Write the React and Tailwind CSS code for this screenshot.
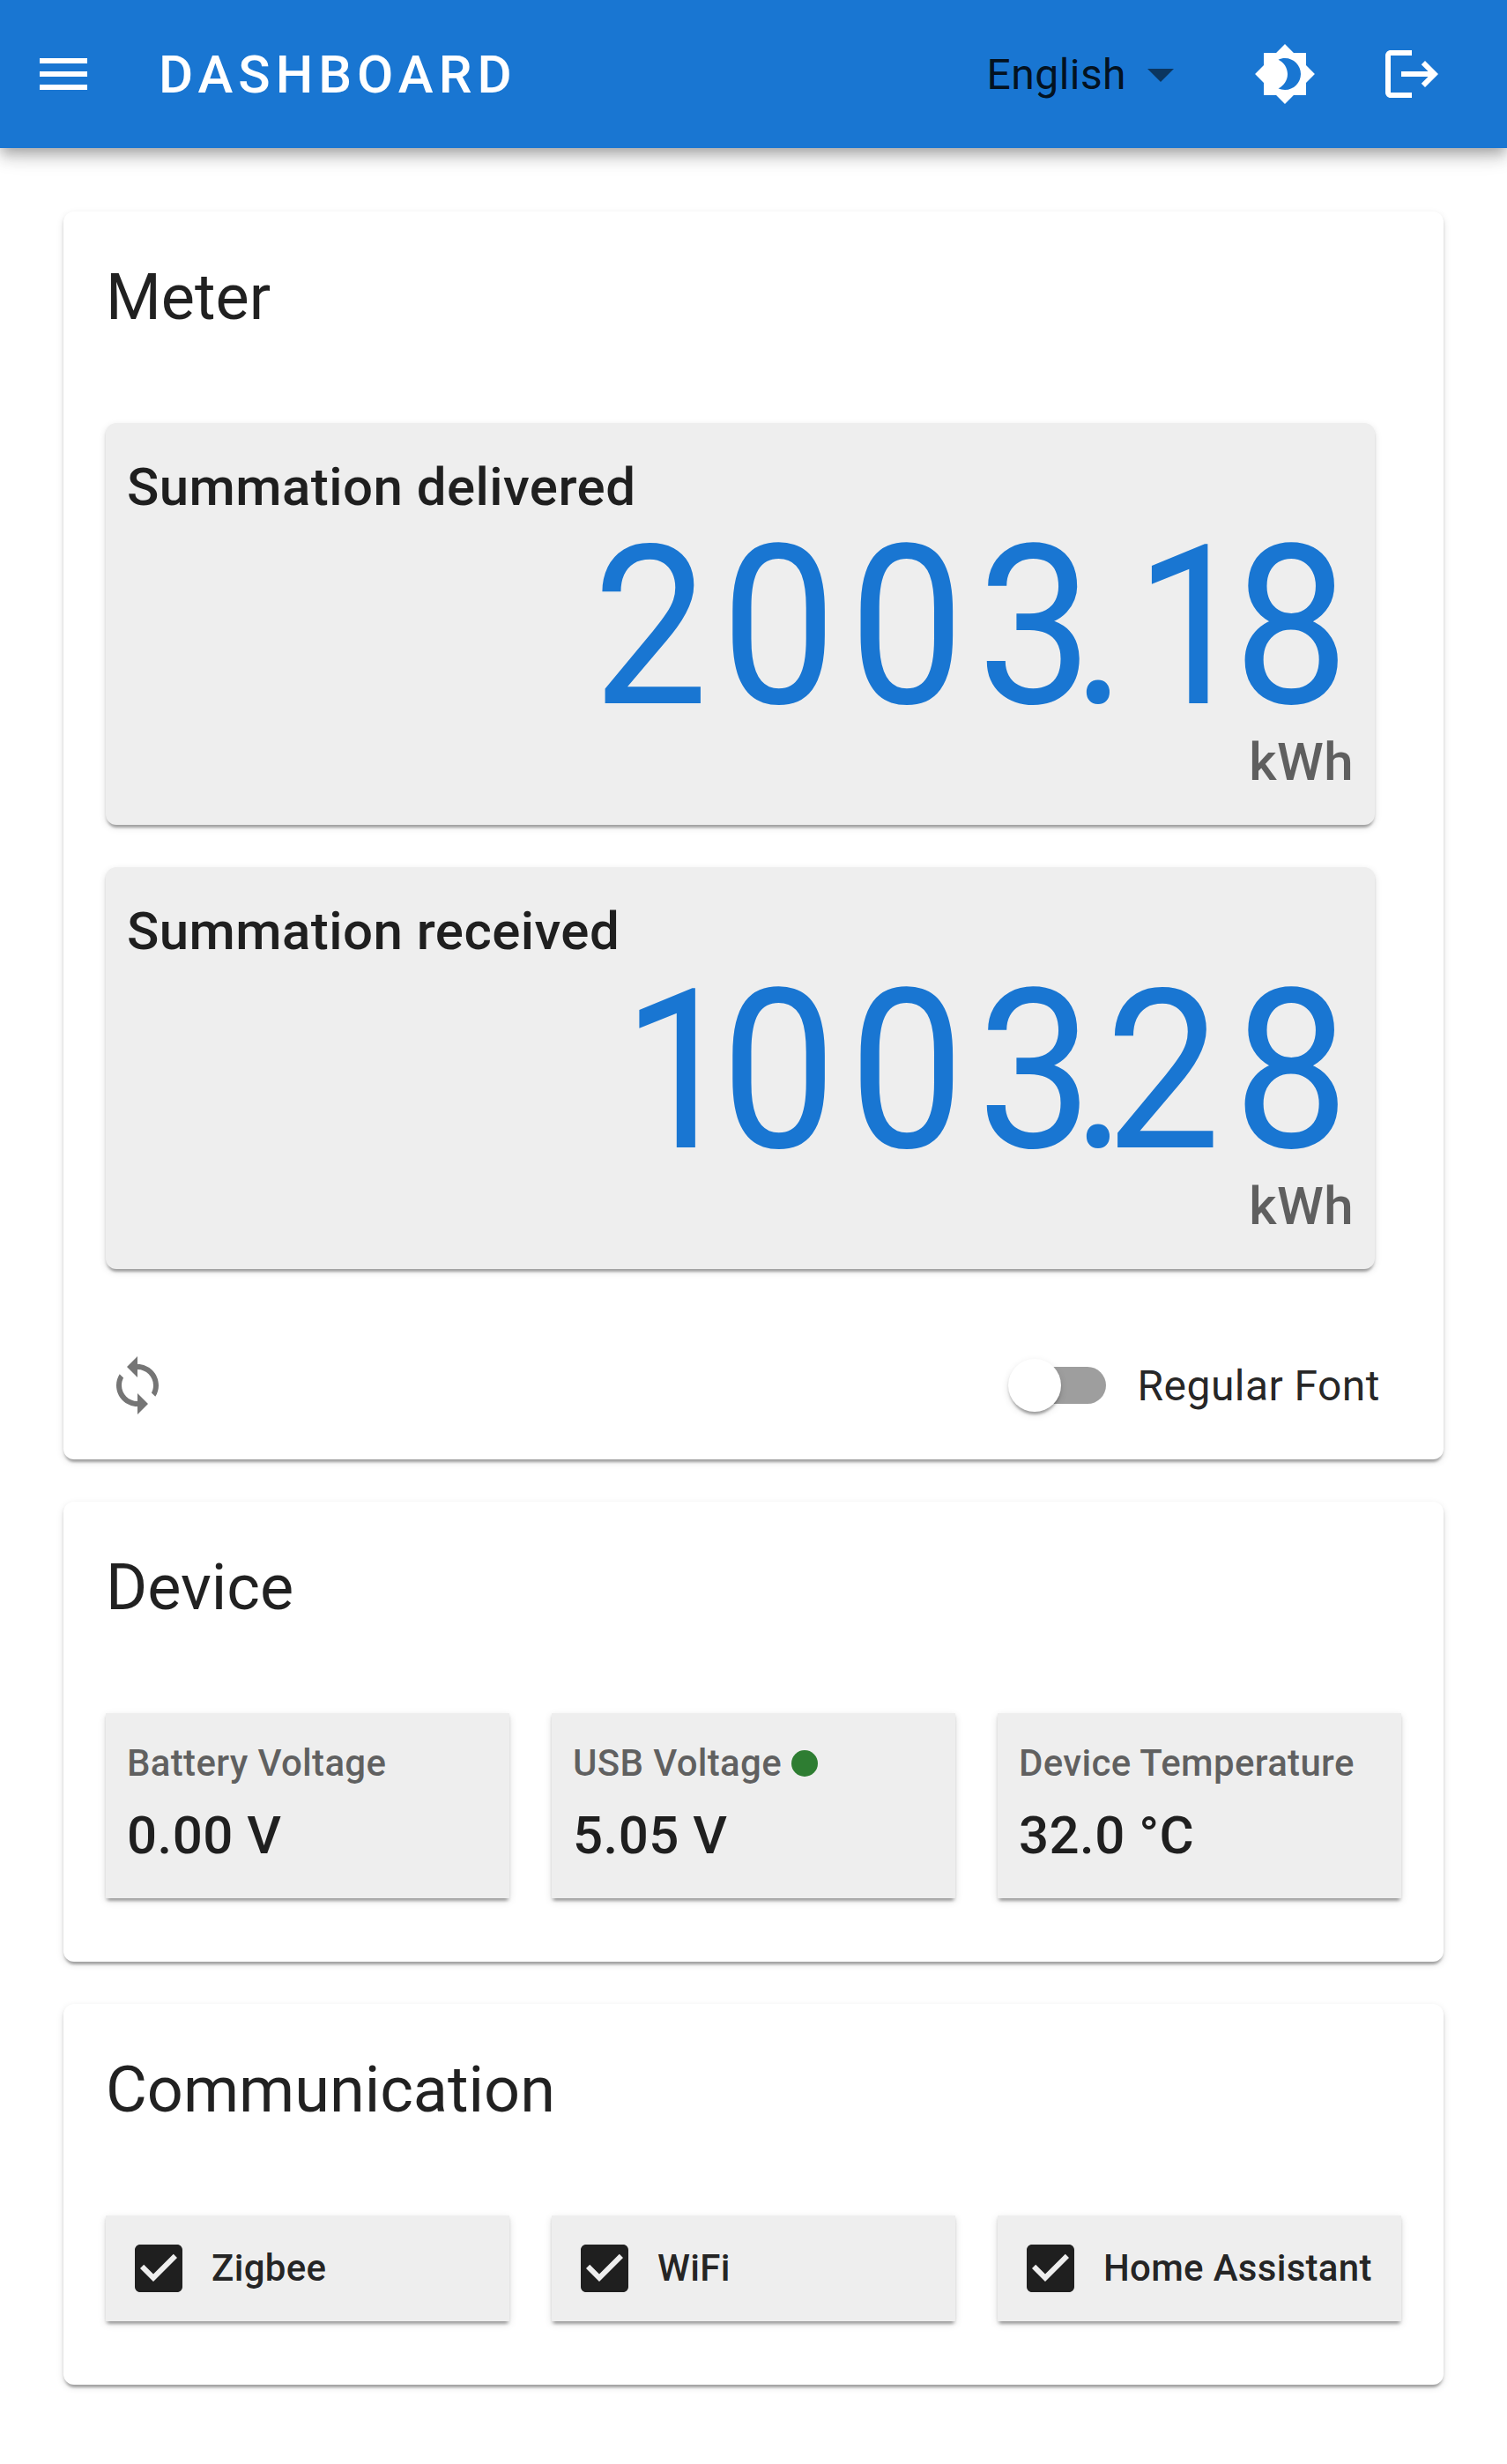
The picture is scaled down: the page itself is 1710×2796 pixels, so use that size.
// src/App.jsx
import { useState } from 'react';

// ── Icons (24x24 grid) ─────────────────────────────────────────────────────
const ICONS = {
  menu: 'M3 18h18v-2H3v2zm0-5h18v-2H3v2zm0-7v2h18V6H3z',
  arrowDown: 'm7 10 5 5 5-5z',
  brightness:
    'M20 8.69V4h-4.69L12 .69 8.69 4H4v4.69L.69 12 4 15.31V20h4.69L12 23.31 15.31 20H20v-4.69L23.31 12 20 8.69zM12 18c-.89 0-1.74-.2-2.5-.55C11.56 16.5 13 14.42 13 12s-1.44-4.5-3.5-5.45C10.26 6.2 11.11 6 12 6c3.31 0 6 2.69 6 6s-2.69 6-6 6z',
  logout:
    'm17 7-1.41 1.41L18.17 11H8v2h10.17l-2.58 2.58L17 17l5-5zM4 5h8V3H4c-1.1 0-2 .9-2 2v14c0 1.1.9 2 2 2h8v-2H4V5z',
  sync:
    'M12 4V1L8 5l4 4V6c3.31 0 6 2.69 6 6 0 1.01-.25 1.97-.7 2.8l1.46 1.46C19.54 15.03 20 13.57 20 12c0-4.42-3.58-8-8-8zm0 14c-3.31 0-6-2.69-6-6 0-1.01.25-1.97.7-2.8L5.24 7.74C4.46 8.97 4 10.43 4 12c0 4.42 3.58 8 8 8v3l4-4-4-4v3z',
  checkbox:
    'M19 3H5c-1.11 0-2 .9-2 2v14c0 1.1.89 2 2 2h14c1.11 0 2-.9 2-2V5c0-1.1-.89-2-2-2zm-9 14l-5-5 1.41-1.41L10 14.17l7.59-7.59L19 8l-9 9z',
};

function Icon({ name, className = '' }) {
  return (
    <svg viewBox="0 0 24 24" fill="currentColor" className={`size-[72px] shrink-0 ${className}`}>
      <path d={ICONS[name]} />
    </svg>
  );
}

// ── Data ───────────────────────────────────────────────────────────────────
const METERS = [
  { label: 'Summation delivered', value: '2003.18', unit: 'kWh' },
  { label: 'Summation received', value: '1003.28', unit: 'kWh' },
];

const SENSORS = [
  { label: 'Battery Voltage', value: '0.00 V' },
  { label: 'USB Voltage', value: '5.05 V', active: true },
  { label: 'Device Temperature', value: '32.0 °C' },
];

const LINKS = ['Zigbee', 'WiFi', 'Home Assistant'];

const PAPER_SHADOW =
  'shadow-[0_6px_3px_-3px_rgba(0,0,0,0.2),0_3px_3px_0_rgba(0,0,0,0.14),0_3px_9px_0_rgba(0,0,0,0.12)]';

const TITLE_TEXT = 'h-24 text-[60px] font-medium leading-[98px] tracking-[0.45px]';

// ── App bar ────────────────────────────────────────────────────────────────
function TopBar() {
  return (
    <header className="flex h-[168px] items-center bg-[#1976d2] pl-9 pr-[72px] text-white shadow-[0_6px_12px_-3px_rgba(0,0,0,0.2),0_12px_15px_0_rgba(0,0,0,0.14),0_3px_30px_0_rgba(0,0,0,0.12)]">
      <button aria-label="Menu">
        <Icon name="menu" />
      </button>
      <h1 className="ml-[72px] h-24 grow text-[60px] font-medium leading-[98px] tracking-[6px]">
        DASHBOARD
      </h1>
      <button className="flex items-center gap-[3px] text-black/87">
        <span className="text-[48px] leading-[69px] tracking-[0.45px]">English</span>
        <Icon name="arrowDown" className="text-black/54" />
      </button>
      <button aria-label="Theme" className="ml-[69px]">
        <Icon name="brightness" />
      </button>
      <button aria-label="Log out" className="ml-[72px]">
        <Icon name="logout" />
      </button>
    </header>
  );
}

// ── Card with title ────────────────────────────────────────────────────────
function Card({ title, children }) {
  return (
    <section className={`rounded-[12px] bg-white ${PAPER_SHADOW}`}>
      <h2 className="px-12 pb-[46px] pt-[50px] text-[72px] leading-[96px]">{title}</h2>
      {children}
    </section>
  );
}

// Every digit has a cell of its own, right-aligned as on an LCD;
// the decimal point takes no room, so digits stay on one pitch
function Readout({ value }) {
  return (
    <div className="flex h-[216px] origin-right scale-x-92 justify-end pr-[6px] text-[253px] leading-[223px] text-[#1976d2]">
      {value.split('').map((char, i) =>
        char === '.' ? (
          <span key={i} className="flex w-0 translate-x-2 justify-center">
            .
          </span>
        ) : (
          <span
            key={i}
            className={`flex w-[158px] shrink-0 justify-end ${char === '1' ? 'translate-x-9' : ''}`}
          >
            {char}
          </span>
        )
      )}
    </div>
  );
}

function MeterPanel({ label, value, unit }) {
  return (
    <div className={`rounded-[12px] bg-[#eee] p-6 ${PAPER_SHADOW}`}>
      <div className={TITLE_TEXT}>{label}</div>
      <Readout value={value} />
      <div className={`text-right text-black/60 ${TITLE_TEXT}`}>{unit}</div>
    </div>
  );
}

function SensorPanel({ label, value, active }) {
  return (
    <div className={`bg-[#eee] p-6 ${PAPER_SHADOW}`}>
      <div className="flex items-center whitespace-nowrap text-[42px] font-medium leading-[66px] tracking-[0.32px] text-black/60">
        {label}
        {active && <span className="ml-[11px] size-[30px] rounded-full bg-[#2e7d32]" />}
      </div>
      <div className={TITLE_TEXT}>{value}</div>
    </div>
  );
}

function LinkPanel({ label }) {
  return (
    <div className={`flex h-[120px] items-center gap-6 bg-[#eee] px-6 ${PAPER_SHADOW}`}>
      <Icon name="checkbox" />
      <span className="whitespace-nowrap text-[42px] font-medium leading-[66px] tracking-[0.3px]">
        {label}
      </span>
    </div>
  );
}

function FontSwitch({ checked, onChange }) {
  return (
    <button
      role="switch"
      aria-checked={checked}
      onClick={onChange}
      className="mr-12 flex items-center"
    >
      <span className="flex h-[114px] w-[174px] items-center pl-9">
        <span className="flex h-[42px] w-[102px] items-center rounded-full bg-black/38">
          <span
            className={`size-[60px] shrink-0 rounded-full bg-white ${PAPER_SHADOW} ${
              checked ? 'ml-[51px]' : '-ml-[9px]'
            }`}
          />
        </span>
      </span>
      <span className="h-[72px] text-[48px] leading-[74px] tracking-[0.45px]">Regular Font</span>
    </button>
  );
}

// ── Page ───────────────────────────────────────────────────────────────────
export default function App() {
  const [regularFont, setRegularFont] = useState(false);

  return (
    <div className="min-h-[2796px] w-[1710px] overflow-hidden bg-white font-[Roboto,sans-serif] text-black/87">
      <TopBar />
      <main className="flex flex-col gap-12 p-[72px]">
        <Card title="Meter">
          <div className="flex w-[1536px] flex-col gap-12 p-12">
            {METERS.map((m) => (
              <MeterPanel key={m.label} {...m} />
            ))}
          </div>
          <div className="flex items-center justify-between p-6">
            <button aria-label="Refresh" className="p-6 text-black/54">
              <Icon name="sync" />
            </button>
            <FontSwitch checked={regularFont} onChange={() => setRegularFont((v) => !v)} />
          </div>
        </Card>

        <Card title="Device">
          <div className="grid grid-cols-3 gap-12 px-12 pb-[72px] pt-12">
            {SENSORS.map((s) => (
              <SensorPanel key={s.label} {...s} />
            ))}
          </div>
        </Card>

        <Card title="Communication">
          <div className="grid grid-cols-3 gap-12 px-12 pb-[72px] pt-12">
            {LINKS.map((label) => (
              <LinkPanel key={label} label={label} />
            ))}
          </div>
        </Card>
      </main>
    </div>
  );
}
